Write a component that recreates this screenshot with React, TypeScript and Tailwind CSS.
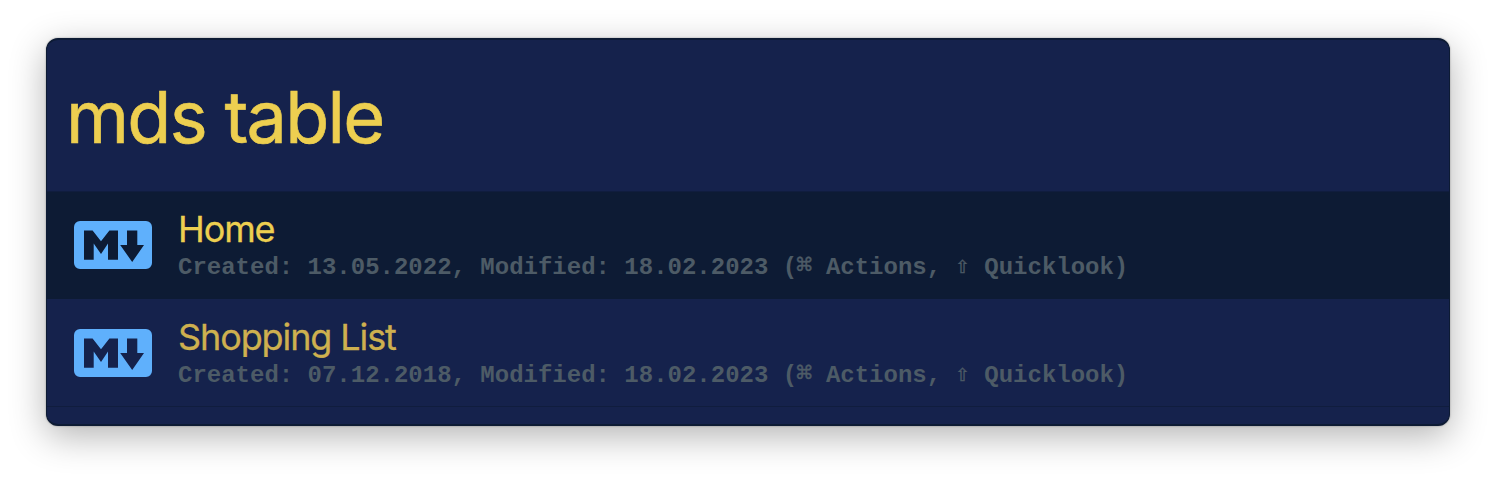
type Result = { title: string; created: string; modified: string; selected: boolean };

const results: Result[] = [
  { title: "Home", created: "13.05.2022", modified: "18.02.2023", selected: true },
  { title: "Shopping List", created: "07.12.2018", modified: "18.02.2023", selected: false },
];

function MarkdownIcon({ selected }: { selected: boolean }) {
  return (
    <svg
      viewBox="0 0 78 48"
      className={selected ? "mt-[29px] h-12 w-[78px] shrink-0" : "mt-[30px] h-12 w-[78px] shrink-0"}
      aria-hidden="true"
    >
      <path
        fill="#5fb0fc"
        fillRule="evenodd"
        d="M6 0H72A6 6 0 0 1 78 6V42A6 6 0 0 1 72 48H6A6 6 0 0 1 0 42V6A6 6 0 0 1 6 0ZM10 38.7V9.5H18.6L27 20.2L35.4 9.5H44V38.7H34V22.5L27 33L19.7 22.5V38.7ZM53 9.5H63.3V24H70L58.2 41L46.2 24H53Z"
      />
    </svg>
  );
}

function ResultRow({ title, created, modified, selected }: Result) {
  return (
    <li
      className={
        selected
          ? "flex h-[108px] items-start border-t border-[#101d3e] bg-[#0d1b34] pl-[27px] text-[#edcf50]"
          : "flex h-[108px] items-start border-b border-[#101d3e] pl-[27px] text-[#ceb04f]"
      }
    >
      <MarkdownIcon selected={selected} />
      <div className={selected ? "mt-[16px] ml-[26px]" : "mt-[17px] ml-[26px]"}>
        <div className="h-[44px] font-['Inter',sans-serif] text-[36px] leading-[42px] tracking-[-1.1px] whitespace-nowrap [-webkit-text-stroke:0.3px_currentColor]">
          {title}
        </div>
        <div className="h-[32px] font-['Liberation_Mono',monospace] text-[24px] leading-[32px] font-bold tracking-[-0.005px] whitespace-pre text-[#4d5b66]">
          Created: {created}, Modified: {modified} (
          <span className="inline-flex w-[14.4px] justify-center align-[3px] font-['DejaVu_Sans',sans-serif] text-[19px] leading-none font-normal [-webkit-text-stroke:0.4px_currentColor]">⌘</span> Actions,{" "}
          <span className="inline-flex w-[14.4px] justify-center align-[1px] font-['DejaVu_Sans',sans-serif] text-[18px] leading-none font-normal [-webkit-text-stroke:0.4px_currentColor]">⇧</span> Quicklook)
        </div>
      </div>
    </li>
  );
}

export default function App() {
  return (
    <main className="h-[480px] w-[1496px] overflow-hidden bg-white px-[46px] pt-[38px]">
      <section className="h-[388px] overflow-hidden rounded-[12px] border-2 border-x-[1px] border-[#0d1b34] bg-[#15224c] shadow-[0_0_2px_rgba(0,0,0,0.35),0_10px_36px_rgba(0,0,0,0.3)]">
        <div className="flex h-[151px] items-center pt-[3px] pl-[19px] font-['Inter',sans-serif] text-[72px] tracking-[-1.75px] text-[#edcf50] [-webkit-text-stroke:0.6px_currentColor]">
          mds table
        </div>
        <ul>
          {results.map((r) => (
            <ResultRow key={r.title} {...r} />
          ))}
        </ul>
      </section>
    </main>
  );
}
